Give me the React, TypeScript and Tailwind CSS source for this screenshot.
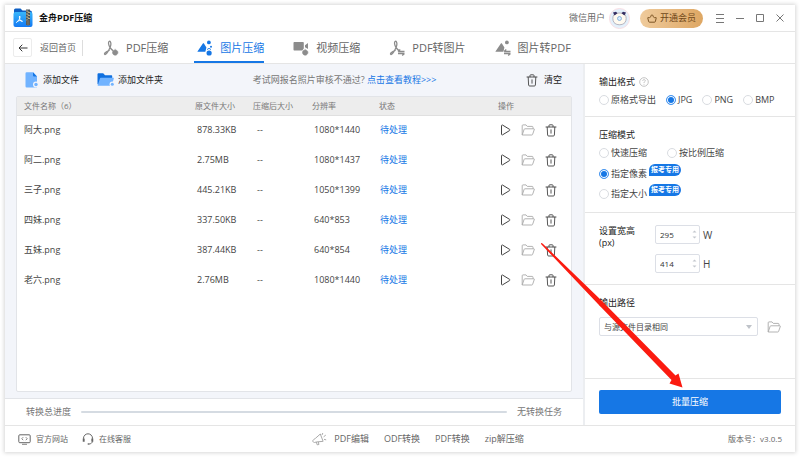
import type { ReactNode } from "react";

const files = [
  { name: "阿大.png", size: "878.33KB", resolution: "1080*1440" },
  { name: "阿二.png", size: "2.75MB", resolution: "1080*1437" },
  { name: "三子.png", size: "445.21KB", resolution: "1050*1399" },
  { name: "四妹.png", size: "337.50KB", resolution: "640*853" },
  { name: "五妹.png", size: "387.44KB", resolution: "640*854" },
  { name: "老六.png", size: "2.76MB", resolution: "1080*1440" },
];

/* ---------- Icons ---------- */

const AppLogo = () => (
  <svg width="20" height="20" viewBox="0 0 20 20">
    <defs>
      <linearGradient id="logoFill" x1="0" y1="0" x2="0" y2="1">
        <stop offset="0" stopColor="#38b6fb" />
        <stop offset="1" stopColor="#1479f2" />
      </linearGradient>
    </defs>
    <path d="M1 2a1.500 1.500 0 0 1 1.500-1.500h5l2 2H17a2 2 0 0 1 2 2V15H1z" fill="#0d5fc4" />
    <rect x="0.500" y="4" width="19" height="15" rx="2" fill="url(#logoFill)" />
    <path
      d="M6.500 8c1.300.8.200 3.700-3 6.500.8-2.200 4.700-2.500 6-1.200-2 .4-3.500-2.300-3-5.300z"
      fill="none"
      stroke="#fff"
      strokeWidth="1"
      strokeLinejoin="round"
    />
    <rect x="13" y="1.500" width="4" height="15.500" fill="#46525c" />
    <path d="M13 3h2v1.500h2M13 6h2v1.500h2M13 9h2v1.500h2M13 12h2" stroke="#c6b58a" strokeWidth="0.900" fill="none" />
    <rect x="13.500" y="12" width="3" height="5.500" rx="1" fill="#6f695c" />
  </svg>
);

const PdfShape = () => (
  <path
    d="M6.300 1.300c-1.500.3-.7 3.700.5 5.800 1 1.700 2 2.700 3 3.200M7.400 1.800c.9 1.500.2 4.900-1.300 7.700-1.300 2.600-3 5.200-4.200 5-1.300-.4.600-2.900 4.300-4.200M6.300 1.300c.5-.1.900.1 1.100.5"
    fill="none"
    stroke="currentColor"
    strokeWidth="1.300"
    strokeLinecap="round"
  />
);

const MountainShape = () => (
  <path d="M.6 11.200 5.700 3.800c.4-.6 1-.6 1.400 0l1.700 2.600.6 1.100-.9 3.700c-.1.400-.4.600-.8.600H1c-.5 0-.7-.3-.4-.6z" fill="currentColor" />
);

const SwapShape = () => (
  <path d="M9 11.500h6.500M9 11.500l2.300-2M15.500 13.500H9M15.500 13.500l-2.300 2" fill="none" stroke="currentColor" strokeWidth="1.300" />
);

const PressShape = () => (
  <path d="M12.200 8.800v1.300M12.200 10.100c1.700 0 2.700 1 2.700 2.400s-1.200 2.700-2.700 2.700-2.700-1.200-2.700-2.700 1-2.400 2.700-2.400z" fill="currentColor" stroke="currentColor" strokeWidth="0.600" />
);

const TabIcon = ({ children }: { children: ReactNode }) => (
  <svg width="16" height="16" viewBox="0 0 16 16" className="shrink-0">
    {children}
  </svg>
);

const TrashIcon = () => (
  <svg width="12" height="13" viewBox="0 0 12 13" fill="none" stroke="currentColor" strokeWidth="0.900" strokeLinecap="round">
    <path d="M1 3h10M4 2.800V1.500a.7.700 0 0 1 .7-.7h2.600a.7.700 0 0 1 .7.700v1.300M2.200 3.200l.4 7.800a1.100 1.100 0 0 0 1.100 1h4.600a1.100 1.100 0 0 0 1.100-1l.4-7.800M6 5.800v3.400" />
  </svg>
);

const FolderIcon = () => (
  <svg width="14" height="12" viewBox="0 0 14 12" fill="none" stroke="currentColor" strokeWidth="0.900" strokeLinejoin="round">
    <path d="M1.200 11V1.700c0-.5.300-.8.800-.8h3l1.300 1.500h4.900c.5 0 .8.300.8.800v1.600M1.200 11l1.900-5.600c.1-.4.400-.6.800-.6h8.900c.5 0 .7.300.5.700l-1.700 4.900c-.1.400-.4.600-.8.600z" />
  </svg>
);

const PlayIcon = () => (
  <svg width="11" height="12" viewBox="0 0 11 12" fill="none" stroke="currentColor" strokeLinejoin="round">
    <path d="M1.500 1.800c0-.7.500-1 1.100-.7l6.900 4.200c.6.400.6.900 0 1.300l-6.900 4.200c-.6.400-1.100.1-1.100-.6z" />
  </svg>
);

const AddFileIcon = () => (
  <svg width="14" height="16" viewBox="0 0 14 16">
    <path d="M.5 1.500A1.200 1.200 0 0 1 1.700.3H8l4 4.200v11H1.700A1.200 1.200 0 0 1 .5 14.300z" fill="#71b3ff" />
    <path d="M8 .3l4 4.200H9A1 1 0 0 1 8 3.500z" fill="#1475e4" />
    <circle cx="11" cy="12.500" r="3" fill="#f3f5fa" />
    <circle cx="11" cy="12.500" r="1.700" fill="#71b3ff" />
  </svg>
);

const AddFolderIcon = () => (
  <svg width="18" height="14" viewBox="0 0 18 14">
    <path d="M.5 1.200C.5.700.9.300 1.400.3h4.800L8 2.200h6.200c.6 0 1 .4 1 1v8H.5z" fill="#0f6fdf" />
    <path d="M3.600 4.700h12.600c.5 0 .8.400.6.900l-2 7.100H.6L3 5.200c.1-.3.300-.5.600-.5z" fill="#71b3ff" />
    <circle cx="15.300" cy="11.200" r="2.700" fill="#f3f5fa" />
    <circle cx="15.300" cy="11.200" r="1.500" fill="#71b3ff" />
  </svg>
);

const Avatar = () => (
  <svg width="21" height="21" viewBox="0 0 21 21">
    <circle cx="10.500" cy="10.500" r="10" fill="#e3f0fb" stroke="#f8dde2" />
    <path d="M5 6.500c2-2 9-2 11 0 1.600 2 1.500 6 0 8-2.500 3-8.500 3-11 0-1.500-2-1.600-6 0-8z" fill="#fffaf0" stroke="#9a96a8" strokeWidth="0.700" />
    <path d="M4 4.500l3-.7 1.500 1.500-3 2.200zM17 4.500l-3-.7-1.500 1.500 3 2.200z" fill="#342d61" />
    <circle cx="10.500" cy="10.500" r="2" fill="#d7ebff" stroke="#6a9ed1" strokeWidth="0.700" />
  </svg>
);

/* ---------- Small parts ---------- */

const tabs = [
  {
    label: "PDF压缩",
    active: false,
    icon: (
      <>
        <PdfShape />
        <PressShape />
      </>
    ),
  },
  {
    label: "图片压缩",
    active: true,
    icon: (
      <>
        <MountainShape />
        <circle cx="11.900" cy="2.400" r="1.900" fill="currentColor" />
        <circle cx="14" cy="6.800" r="1" fill="currentColor" />
        <path d="M10 9.600l2-1.300 2 1.300" fill="none" stroke="currentColor" strokeWidth="0.900" />
        <circle cx="12.100" cy="13" r="2.600" fill="currentColor" />
      </>
    ),
  },
  {
    label: "视频压缩",
    active: false,
    icon: (
      <>
        <path d="M1.500 2h8.300c.6 0 1 .4 1 1v5.400l-1.500 2.100H1.500c-.6 0-1-.4-1-1V3c0-.6.400-1 1-1zM12 5.200 15 3v6l-3-1.700z" fill="currentColor" />
        <PressShape />
      </>
    ),
  },
  {
    label: "PDF转图片",
    active: false,
    icon: (
      <>
        <PdfShape />
        <SwapShape />
      </>
    ),
  },
  {
    label: "图片转PDF",
    active: false,
    icon: (
      <>
        <MountainShape />
        <circle cx="11.900" cy="2.400" r="1.900" fill="currentColor" />
        <SwapShape />
      </>
    ),
  },
];

type RadioProps = { name: string; label: string; checked?: boolean; badge?: string };

const Radio = ({ name, label, checked, badge }: RadioProps) => (
  <label className="flex items-center gap-0.5 whitespace-nowrap">
    <input
      type="radio"
      name={name}
      defaultChecked={checked}
      className="h-[10px] w-[10px] shrink-0 appearance-none rounded-full border border-[#d9dce1] bg-white checked:border-[#4a98f0] checked:bg-[#1677e5] checked:shadow-[inset_0_0_0_1px_white]"
    />
    {label}
    {badge && (
      <span className="mb-2 rounded-full rounded-bl-none bg-[#1677e5] px-0.5 text-[7px] leading-[12px] font-bold text-white">
        {badge}
      </span>
    )}
  </label>
);

type SizeFieldProps = { id: string; unit: string; value: string };

const SizeField = ({ id, unit, value }: SizeFieldProps) => (
  <div className="flex items-center gap-[3px]">
    <div className="flex h-[19px] w-[45px] items-center rounded-[2px] border border-[#dcdfe6] pr-0.5 pl-1">
      <input id={id} type="text" inputMode="numeric" defaultValue={value} className="min-w-0 flex-1 text-[8px] text-[#333] outline-none" />
      <svg width="5" height="9" viewBox="0 0 5 9" fill="#c3c7cd">
        <path d="M.5 2.500 2.500.5l2 2zM.5 6.500l2 2 2-2z" />
      </svg>
    </div>
    <label htmlFor={id} className="text-[10px]">{unit}</label>
  </div>
);

const App = () => {
  return (
    <div className="flex min-h-screen bg-white p-[5px] font-['Open_Sans','Noto_Sans_CJK_SC',sans-serif] text-[9px] leading-[12px] text-[#444]">
      <div className="relative flex flex-1 flex-col bg-white shadow-[0_0_4px_1px_rgba(0,0,0,0.16)]">
        {/* Title bar */}
        <header className="flex h-[27px] shrink-0 items-center border-b border-[#e5e5e5] pr-[10px] pl-2">
          <AppLogo />
          <h1 className="ml-[6px] font-bold text-[#111]">金舟PDF压缩</h1>
          <div className="ml-auto flex items-center">
            <span className="mr-1 text-[#666]">微信用户</span>
            <Avatar />
            <button className="ml-[10px] flex h-[19px] items-center gap-[3px] rounded-full bg-linear-to-r from-[#efcb9c] to-[#dea763] px-[7px] text-[#704818]">
              <svg width="10" height="9" viewBox="0 0 10 9" fill="none" stroke="currentColor" strokeWidth="0.900" strokeLinejoin="round">
                <path d="M1.300 3.500c.9.300 1.700.2 2.200-.4C3.900 2.500 4 .8 5 .8s1.100 1.700 1.500 2.300c.5.600 1.300.7 2.200.4.400-.1.600.1.500.5l-.8 3.400c-.1.500-.4.800-.9.800h-5c-.5 0-.8-.3-.9-.8L.8 4c-.1-.4.100-.6.500-.5z" />
              </svg>
              开通会员
            </button>
            <div className="ml-3 flex items-center gap-[10px] text-[#777]">
              <button aria-label="菜单">
                <svg width="10" height="10" viewBox="0 0 10 10" stroke="currentColor">
                  <path d="M1 1.500h8M1 5.500h8M1 9.500h8" />
                </svg>
              </button>
              <button aria-label="最小化">
                <svg width="10" height="10" viewBox="0 0 10 10" stroke="currentColor">
                  <path d="M1 5.500h8" />
                </svg>
              </button>
              <button aria-label="最大化">
                <svg width="10" height="10" viewBox="0 0 10 10" fill="none" stroke="currentColor">
                  <path d="M1.500 1.500h7v7h-7z" />
                </svg>
              </button>
              <button aria-label="关闭">
                <svg width="10" height="10" viewBox="0 0 10 10" stroke="currentColor">
                  <path d="M1.500 1.500l7 7M8.500 1.500l-7 7" />
                </svg>
              </button>
            </div>
          </div>
        </header>

        {/* Tabs */}
        <nav className="flex h-8 shrink-0 items-center border-b border-[#e5e5e5] pl-2">
          <button className="flex items-center gap-2 text-[#666]">
            <span className="flex h-[19px] w-[19px] items-center justify-center rounded-[2px] border border-[#ececec] text-[#333]">
              <svg width="10" height="8" viewBox="0 0 10 8" fill="none" stroke="currentColor">
                <path d="M9.500 4H1M4.300.7 1 4l3.300 3.300" />
              </svg>
            </span>
            返回首页
          </button>
          <span className="mx-[6px] h-4 w-px bg-[#ddd]" />
          <div className="ml-[11px] flex gap-[26px] self-stretch text-[11px]">
            {tabs.map((tab) => (
              <button
                key={tab.label}
                className={
                  tab.active
                    ? "flex items-center gap-[7px] border-b-2 border-[#1677e5] pt-0.5 pl-[3px] whitespace-nowrap text-[#1677e5]"
                    : "flex items-center gap-[7px] border-b-2 border-transparent pt-0.5 pl-[3px] whitespace-nowrap text-[#666]"
                }
              >
                <span className={tab.active ? "" : "text-[#8c8c8c]"}>
                  <TabIcon>{tab.icon}</TabIcon>
                </span>
                {tab.label}
              </button>
            ))}
          </div>
        </nav>

        <div className="flex flex-1">
          {/* File list */}
          <main className="flex min-w-0 flex-1 flex-col">
            <div className="flex flex-1 flex-col bg-[#f3f5fa] px-[11px] pb-[6px]">
              <div className="flex h-8 items-center pr-[10px] pl-[9px] text-[#222]">
                <button className="flex items-center gap-1">
                  <AddFileIcon />
                  添加文件
                </button>
                <button className="ml-[18px] flex items-center gap-[3px]">
                  <AddFolderIcon />
                  添加文件夹
                </button>
                <p className="mx-auto text-[#777]">
                  考试网报名照片审核不通过?{" "}
                  <a href="#tutorial" className="text-[#1677e5]">点击查看教程&gt;&gt;&gt;</a>
                </p>
                <button className="flex items-center gap-[6px]">
                  <span className="text-[#444]">
                    <TrashIcon />
                  </span>
                  清空
                </button>
              </div>

              <div className="flex-1 rounded-[2px] border border-[#e2e4e8] bg-white">
                <table className="w-full table-fixed text-left">
                  <thead className="bg-[#ededed] text-[8px] text-[#777]">
                    <tr className="h-[18px] border-b border-[#e0e0e0]">
                      <th className="pl-[7px] font-normal">文件名称（6）</th>
                      <th className="w-[58px] pl-2 font-normal">原文件大小</th>
                      <th className="w-[59px] pl-2 font-normal">压缩后大小</th>
                      <th className="w-[67px] pl-2 font-normal">分辨率</th>
                      <th className="w-[119px] pl-2 font-normal">状态</th>
                      <th className="w-[81px] pl-2 font-normal">操作</th>
                    </tr>
                  </thead>
                  <tbody>
                    {files.map((file) => (
                      <tr key={file.name} className="h-[30px]">
                        <td className="pl-[7px]">{file.name}</td>
                        <td className="pl-[10px]">{file.size}</td>
                        <td className="pl-3">--</td>
                        <td className="pl-[10px]">{file.resolution}</td>
                        <td className="pl-[9px] text-[#1677e5]">待处理</td>
                        <td className="pl-[10px]">
                          <div className="flex items-center gap-[10px] text-[#444]">
                            <button aria-label="开始"><PlayIcon /></button>
                            <button aria-label="打开文件夹" className="text-[#aaa]"><FolderIcon /></button>
                            <button aria-label="删除"><TrashIcon /></button>
                          </div>
                        </td>
                      </tr>
                    ))}
                  </tbody>
                </table>
              </div>
            </div>

            {/* Progress */}
            <div className="flex h-[27px] shrink-0 items-center gap-[10px] border-t border-[#e2e4e8] px-[21px] text-[#777]">
              <span>转换总进度</span>
              <div className="h-0.5 flex-1 rounded-full bg-[#d5dbe2]" />
              <span>无转换任务</span>
            </div>
          </main>

          {/* Settings */}
          <aside className="flex w-[212px] shrink-0 flex-col border-l-2 border-[#eceef1] text-[#444]">
            <fieldset className="h-[53px] border-b border-[#e5e5e5] pt-3 pl-[14px]">
              <div className="flex items-center gap-1 text-[#222]">
                输出格式
                <svg width="10" height="10" viewBox="0 0 10 10" fill="none" stroke="#b5b5b5">
                  <circle cx="5" cy="5" r="4.300" strokeWidth="0.800" />
                  <path d="M3.700 4c0-1.900 2.800-1.700 2.600-.2C6.200 4.700 5 4.700 5 6M5 6.900v.8" strokeWidth="0.800" />
                </svg>
              </div>
              <div className="mt-[6px] flex gap-[10px]">
                <Radio name="format" label="原格式导出" />
                <Radio name="format" label="JPG" checked />
                <Radio name="format" label="PNG" />
                <Radio name="format" label="BMP" />
              </div>
            </fieldset>

            <fieldset className="h-24 border-b border-[#e5e5e5] pt-3 pl-[14px]">
              <div className="text-[#222]">压缩模式</div>
              <div className="mt-[6px] flex gap-5">
                <Radio name="mode" label="快速压缩" />
                <Radio name="mode" label="按比例压缩" />
              </div>
              <div className="mt-[5px] flex flex-col">
                <Radio name="mode" label="指定像素" checked badge="报考专用" />
                <Radio name="mode" label="指定大小" badge="报考专用" />
              </div>
            </fieldset>

            <section className="flex h-[72px] gap-5 border-b border-[#e5e5e5] pt-3 pl-[14px]">
              <div className="text-[#222]">
                设置宽高
                <br />
                (px)
              </div>
              <div className="flex flex-col gap-[10px]">
                <SizeField id="width" unit="W" value="295" />
                <SizeField id="height" unit="H" value="414" />
              </div>
            </section>

            <section className="flex-1 px-[14px] pt-3">
              <label htmlFor="path" className="block text-[#222]">输出路径</label>
              <div className="mt-2 flex items-center gap-[9px]">
                <div className="relative flex-1">
                  <select id="path" className="h-[19px] w-full appearance-none rounded-[2px] border border-[#dcdfe6] bg-white pl-1 text-[8px] text-[#444]">
                    <option>与源文件目录相同</option>
                  </select>
                  <svg width="6" height="4" viewBox="0 0 6 4" fill="#bfc3c9" className="pointer-events-none absolute top-2 right-[6px]">
                    <path d="M0 0h6L3 4z" />
                  </svg>
                </div>
                <button aria-label="选择文件夹" className="text-[#aaa]"><FolderIcon /></button>
              </div>
            </section>

            <div className="flex h-[47px] shrink-0 items-center border-t border-[#e5e5e5] px-[14px]">
              <button className="h-6 w-full rounded-[2px] bg-[#1677e5] text-white">批量压缩</button>
            </div>
          </aside>
        </div>

        {/* Footer */}
        <footer className="flex h-[27px] shrink-0 items-center border-t border-[#e5e5e5] px-[13px] text-[#666]">
          <div className="flex flex-1 items-center gap-[14px] text-[8px]">
            <a href="#site" className="flex items-center gap-[5px]">
              <svg width="13" height="11" viewBox="0 0 13 11" fill="none" stroke="currentColor">
                <rect x="0.800" y="0.800" width="11.400" height="7.900" rx="1" />
                <path d="M5.200 3.200 3.800 4.700l1.400 1.500M7.800 3.200l1.400 1.500-1.400 1.500M4 10.300h5" strokeWidth="0.800" />
              </svg>
              官方网站
            </a>
            <a href="#service" className="flex items-center gap-[5px]">
              <svg width="12" height="12" viewBox="0 0 12 12" fill="none" stroke="currentColor">
                <path d="M1.500 6V5.300a4.500 4.500 0 0 1 9 0V6M10.500 8.500c-.4 1.400-1.500 2.300-3.300 2.500" />
                <path d="M1.700 5.500v3.300M10.300 5.500v3.300" strokeWidth="1.900" />
                <path d="M5.700 11h1.600" strokeWidth="1.400" />
              </svg>
              在线客服
            </a>
          </div>
          <div className="flex items-center gap-[15px] pl-9">
            <svg width="15" height="14" viewBox="0 0 15 14" fill="none" stroke="#aaa" strokeLinejoin="round" className="-mr-2">
              <path d="M1.500 7.700 3.500 6.300 8.300 2l2.800 7.300-6.800.7-1.800.5c-1.700-.1-2.300-1.800-1-2.800zM4.300 10l.9 2.800 1.700-.3-.6-2.600M10 3l.8-2M11.600 4.800l2.200-1.700M12 7.300l2.200.6" />
            </svg>
            <a href="#pdf-edit">PDF编辑</a>
            <a href="#odf">ODF转换</a>
            <a href="#pdf">PDF转换</a>
            <a href="#zip">zip解压缩</a>
          </div>
          <span className="flex-1 text-right text-[8px]">版本号：v3.0.5</span>
        </footer>

        {/* Pointer to the start button */}
        <svg width="142" height="146" viewBox="0 0 142 146" fill="#fb1b10" className="pointer-events-none absolute right-[112px] bottom-[63px]">
          <path d="M0 0 1.500.5 60 57 134.500 132.500 137.500 130.500 141.500 144.500 128.500 140.500 130.500 137 57 61 0 1z" />
        </svg>
      </div>
    </div>
  );
};

export default App;
